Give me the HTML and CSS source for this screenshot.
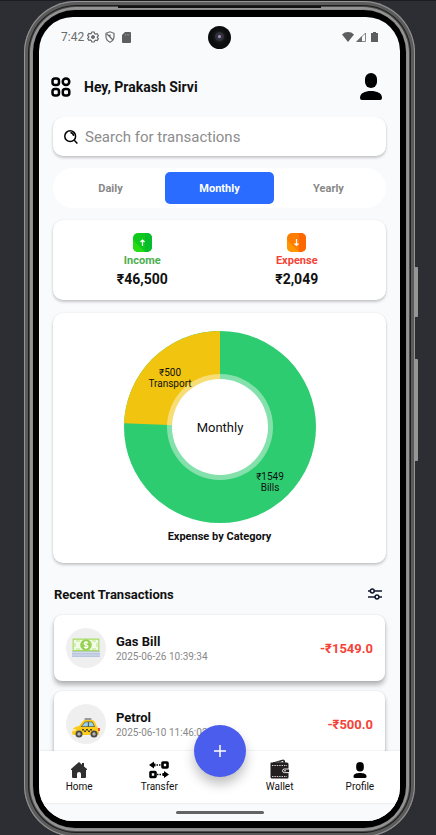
FILE: index.html
```html
<!DOCTYPE html>
<html lang="en">
<head>
<meta charset="utf-8">
<meta name="viewport" content="width=device-width, initial-scale=1">
<title>Expense tracker</title>
<link rel="stylesheet" href="styles.css">
</head>
<body>
<div class="phone">
  <span class="side-key side-key-power"></span>
  <span class="side-key side-key-volume"></span>
  <span class="speaker"></span>
  <div class="bezel">
  <div class="screen">
    <div class="status">
      <div class="status-left">
        <span>7:42</span>
        <svg width="12" height="12" viewBox="0 0 12 12" fill="none" stroke="#6b6c6e"><path stroke-width="1.2" d="M4.8 1h2.4l.4 1.5 1.1.6 1.5-.4 1.2 2-1.1 1v.9l1.1 1-1.2 2-1.5-.4-1.1.6L7.200 11H4.800l-.4-1.400-1.100-.6-1.500.4-1.200-2 1.100-1v-.9l-1.100-1 1.200-2 1.500.4 1.100-.6z"/><circle cx="6" cy="6" r="1.500" fill="#6b6c6e"/></svg>
        <svg class="shield" width="12" height="12" viewBox="0 0 12 12" fill="none" stroke="#6b6c6e" stroke-width="1.200"><path d="M2 2.300 6 .8l4 1.500v3.200c0 2.600-1.600 4.600-4 5.700-2.400-1.100-4-3.100-4-5.700zM3 3l5.500 5.500M6 6V3.500"/></svg>
        <svg class="sd" width="9" height="11" viewBox="0 0 9 11"><path fill="#5d5e60" d="M3 0h5q1 0 1 1v9q0 1-1 1H1q-1 0-1-1V3z"/><path stroke="#a8a9ab" stroke-width=".6" d="M3.500 2v1.500M5.200 2v1.500M6.900 2v1.500"/></svg>
      </div>
      <span class="camera"></span>
      <div class="status-right">
        <svg width="12" height="10" viewBox="0 0 12 10"><path fill="#5d5e60" d="M6 10 0 2.400Q2.500 0 6 0t6 2.400z"/></svg>
        <svg width="10" height="10" viewBox="0 0 10 10"><path fill="none" stroke="#6b6c6e" stroke-width=".8" d="M9.500 1v8.500H1z"/><path fill="#6b6c6e" d="M0 10 6 4v6z"/></svg>
        <svg class="battery" width="7" height="10" viewBox="0 0 7 10"><path fill="#5d5e60" d="M2 0h3v1h2v9H0V1h2z"/></svg>
      </div>
    </div>

    <header class="top">
      <button class="plain" aria-label="Menu"><svg width="20" height="20" viewBox="0 0 20 20" fill="none" stroke="#000" stroke-width="2.500"><rect x="1.500" y="1.500" width="6.500" height="6.500" rx="2.500"/><circle cx="15" cy="4.800" r="3.300"/><rect x="1.500" y="12" width="6.500" height="6.500" rx="2.500"/><rect x="11.800" y="12" width="6.500" height="6.500" rx="2.500"/></svg></button>
      <h1>Hey, Prakash Sirvi</h1>
      <button class="plain" aria-label="Account"><svg width="22" height="28" viewBox="0 0 22 28"><rect x="5" y="0" width="12" height="15" rx="6"/><path d="M0 25c0-5 5-7 11-7s11 2 11 7q0 2-2 2H2q-2 0-2-2z"/></svg></button>
    </header>

    <main>
      <label class="card search">
        <svg width="14" height="14" viewBox="0 0 14 14" fill="none" stroke="#000" stroke-width="1.500"><circle cx="6.200" cy="6.200" r="5.400"/><path d="m10.200 10.200 3.200 3.300M6.500 2.500q2.800.6 3.200 3.400"/></svg>
        <input type="text" placeholder="Search for transactions" aria-label="Search for transactions">
      </label>

      <div class="tabs">
        <button>Daily</button>
        <button class="active">Monthly</button>
        <button>Yearly</button>
      </div>

      <section class="card summary">
        <div>
          <svg width="19" height="19" viewBox="0 0 19 19"><defs><clipPath id="tile"><rect width="19" height="19" rx="5"/></clipPath></defs><g clip-path="url(#tile)"><path fill="#0fca1c" d="M0 0h19v19H0z"/><path fill="#27dc12" d="m0 7 12 12H0z"/><path fill="#07bd2c" d="M12 0h7v19h-7z"/></g><path fill="none" stroke="#fff" stroke-width="1.200" d="M9.500 13V7M7.500 9l2-2 2 2"/></svg>
          <span class="income">Income</span>
          <strong>₹46,500</strong>
        </div>
        <div>
          <svg width="19" height="19" viewBox="0 0 19 19"><g clip-path="url(#tile)"><path fill="#ff7d00" d="M0 0h19v19H0z"/><path fill="#ff9800" d="m0 7 12 12H0z"/><path fill="#ff6800" d="M12 0h7v19h-7z"/></g><path fill="none" stroke="#fff" stroke-width="1.200" d="M9.500 6v6.500M7.500 10.500l2 2 2-2"/></svg>
          <span class="expense">Expense</span>
          <strong>₹2,049</strong>
        </div>
      </section>

      <section class="card chart">
        <svg width="192" height="192" viewBox="0 0 192 192" role="img" aria-label="Expense by Category">
          <circle cx="96" cy="96" r="96" fill="#2ecc71"/>
          <path fill="#f1c40f" d="M96 96V0A96 96 0 0 0 .07 92.300z"/>
          <circle cx="96" cy="96" r="53" fill="#fff" fill-opacity=".42"/>
          <circle cx="96" cy="96" r="48" fill="#fff"/>
          <g class="slice-label"><text x="46" y="45">₹500</text><text x="46" y="56">Transport</text><text x="146" y="149">₹1549</text><text x="146" y="160">Bills</text></g>
          <text class="period" x="96" y="101">Monthly</text>
        </svg>
        <h2>Expense by Category</h2>
      </section>

      <div class="recent">
        <h2>Recent Transactions</h2>
        <button class="plain" aria-label="Filter"><svg width="14" height="12" viewBox="0 0 14 12" fill="none" stroke="#10182e" stroke-width="1.500"><path d="M0 3h2.500M6 3h8M0 9h7M11 9h3"/><circle cx="4.300" cy="3" r="1.900"/><circle cx="9" cy="9" r="1.900"/></svg></button>
      </div>

      <ul class="list">
        <li>
          <span class="avatar"><svg width="28" height="20" viewBox="0 0 28 20"><path fill="#b9c5df" d="M0 13h28v6H0z"/><path stroke="#d5ddec" d="M0 14.500h28M0 17h28"/><path fill="#f2fbe9" stroke="#a6dc62" stroke-width="1.200" d="M1.200 1.200h25.600v11.500H1.200z"/><path fill="none" stroke="#b9e580" d="M4 3h4M20 3h4M4 11h4M20 11h4M3 5v4M25 5v4"/><circle cx="14" cy="7" r="5.800" fill="#97d350"/><path fill="none" stroke="#fff" stroke-width="1.200" d="M16 5.200q-.5-1-2-1-1.800 0-1.800 1.400T14 7t1.900 1.400-1.900 1.400q-1.500 0-2-1M14 3v8"/></svg></span>
          <div class="info"><b>Gas Bill</b><time>2025-06-26 10:39:34</time></div>
          <span class="amount">-₹1549.0</span>
        </li>
        <li>
          <span class="avatar"><svg class="taxi" width="28" height="20" viewBox="0 0 28 20"><rect x="12.500" y="0" width="7" height="3.500" rx="1" fill="#999"/><path fill="#fccb1b" d="M1 11q1-2 6-3l4-5q1-1 3-1h6q2 0 3 2l2 5q2 1 2 3v4q0 1-2 1H2q-2 0-2-2l.5-2z"/><path fill="#6b5e36" d="m8.500 9 3.800-4.600q.7-.9 2-.9h5q1.200 0 1.800 1.200L23 9z"/><path fill="#91d5f5" d="m10 8.300 3-3.600q.5-.5 1.300-.5h1.500v4.100zM17 4.200h2.300q.8 0 1.200.8l1.400 3.300H17z"/><path fill="#4b422c" d="M10 11h2v1.500h2V11h2v1.500h2V11h2v1.500h-2V14h-2v-1.500h-2V14h-2v-1.500h-2z"/><path fill="#e64a3c" d="M26 10h2v3h-2z"/><path fill="#fff1a0" d="M1 11h3l-1 2H.5z"/><circle cx="7" cy="16" r="3.500" fill="#4a4a4c"/><circle cx="22" cy="16" r="3.500" fill="#4a4a4c"/><circle cx="7" cy="16" r="1.700" fill="#b5b5b7"/><circle cx="22" cy="16" r="1.700" fill="#b5b5b7"/></svg></span>
          <div class="info"><b>Petrol</b><time>2025-06-10 11:46:02</time></div>
          <span class="amount">-₹500.0</span>
        </li>
      </ul>
    </main>

    <nav class="tabbar">
      <a href="#"><svg width="18" height="18" viewBox="0 0 18 18"><path fill="#303030" d="M9 1 1 8v1h1v7q0 1 1 1h4v-4q0-2 2-2t2 2v4h4q1 0 1-1V9h1V8l-3-2.600V2h-2v1.700z"/></svg>Home</a>
      <a href="#"><svg width="20" height="18" viewBox="0 0 20 18"><path d="M5 .5v2h1.500v3H5v2L0 4zM15 10v2h-1.500v3H15v2l5-3.500z"/><path fill="none" stroke="#000" stroke-width="1.600" stroke-dasharray="1.500 1" d="M7.500 4H12M8 13.500h5.500"/><rect x="13.500" y="1.500" width="5" height="5" rx=".5" fill="none" stroke="#000" stroke-width="2.600"/><rect x="1.500" y="11" width="5" height="5" rx=".5" fill="none" stroke="#000" stroke-width="2.600"/></svg>Transfer</a>
      <button class="fab" aria-label="Add transaction"><svg width="12" height="12" viewBox="0 0 12 12"><path stroke="#fff" stroke-width="1.500" d="M6 0v12M0 6h12"/></svg></button>
      <a href="#"><svg width="20" height="20" viewBox="0 0 20 20"><path fill="#fff" stroke="#231f20" d="m3 4 10-3 1.500 3zM9 3l5-2 1 3"/><path fill="#231f20" d="M1 3.500h16q1.500 0 1.500 1.500v13.500q0 1-1 1H2q-1.500 0-1.500-1.500V4z"/><path stroke="#fff" stroke-width=".8" stroke-dasharray="1.400 1" d="M2 6.500h15M2 17.500h15"/><path fill="#231f20" stroke="#fff" stroke-width=".9" d="M19.500 10h-5q-2 0-2 1.800t2 1.800h5z"/><circle cx="15" cy="11.800" r=".8" fill="#fff"/></svg>Wallet</a>
      <a href="#"><svg width="14" height="18" viewBox="0 0 14 18"><rect x="3.200" y="1" width="7.600" height="9.500" rx="3.800"/><path d="M.5 15.500C.5 12.500 4 12 7 12s6.500.5 6.500 3.500q0 1.500-1.500 1.500H2Q.5 17 .5 15.500z"/></svg>Profile</a>
    </nav>
    <div class="gesture"><span></span></div>
  </div>
  </div>
</div>
</body>
</html>
```
FILE: styles.css
```css
* { box-sizing: border-box; }

body {
  margin: 0;
  height: 100vh;
  overflow: hidden;
  display: flex;
  flex-direction: column;
  background: #2d2e33;
  border-top: 1px solid #1c1c20;
  font-family: Roboto, "Liberation Sans", sans-serif;
  color: #111;
}

h1, h2, ul { margin: 0; padding: 0; }
button { font: inherit; border: 0; cursor: pointer; }
svg { display: block; flex: none; }

.phone {
  position: relative;
  flex: 1;
  min-height: 0;
  margin: 0 21px -2px 24px;
  padding: 9px;
  border-radius: 52px;
  display: flex;
  background: #8a8a8a;
  box-shadow:
    inset 0 0 0 1px #959595,
    inset 0 0 0 4px #5b5b5b,
    inset 0 0 0 5px #1d1d1d,
    inset 0 0 0 6px #4a4a4a,
    inset 0 0 0 8px #939393;
}

.side-key {
  position: absolute;
  left: 100%;
  width: 3px;
  border-radius: 0 1px 1px 0;
  background: #969696;
}
.side-key-power { top: 266px; height: 50px; }
.side-key-volume { top: 358px; height: 102px; }

.speaker {
  position: absolute;
  top: 5px;
  left: 24%;
  right: 24%;
  height: 2px;
  background: #111;
}

.bezel {
  flex: 1;
  min-width: 0;
  padding: 7px 6px;
  display: flex;
  border-radius: 42px;
  background: #000;
}

.screen {
  flex: 1;
  min-width: 0;
  display: flex;
  flex-direction: column;
  overflow: hidden;
  border-radius: 34px;
  background: #f9fafc;
}

.status {
  flex: none;
  display: grid;
  grid-template-columns: 1fr auto 1fr;
  align-items: center;
  height: 40px;
  padding: 0 22px;
  font-size: 12px;
  color: #6b6c6e;
}
.status-left, .status-right { display: flex; align-items: center; }
.status-left { gap: 3px; }
.shield { margin-left: 2px; }
.sd { margin-left: 3px; }
.status-right { justify-content: flex-end; gap: 2px; }
.battery { margin-left: 3px; }
.camera {
  width: 23px;
  height: 23px;
  border-radius: 50%;
  background: radial-gradient(circle at 50% 46%, #a58bc0 0 1px, #36303f 2px, #2c333a 4px, #17181a 5px, #0c0d0e 8px);
}

.top {
  flex: none;
  display: flex;
  align-items: center;
  gap: 13px;
  height: 60px;
  padding: 0 18px 0 12px;
}
.top h1 { flex: 1; font-size: 14px; font-weight: 700; }
.plain { padding: 0; background: none; }

main {
  flex: 1;
  min-height: 0;
  overflow: hidden;
  padding: 0 14px;
  display: flex;
  flex-direction: column;
}
main > * { flex: none; }

.card {
  background: #fff;
  border-radius: 10px;
  box-shadow: 0 2px 3px rgba(0, 0, 0, .2), 0 0 2px rgba(0, 0, 0, .08);
}

.search {
  display: flex;
  align-items: center;
  gap: 7px;
  height: 39px;
  padding: 0 11px;
}
.search input {
  flex: 1;
  min-width: 0;
  padding: 0;
  border: 0;
  outline: 0;
  background: none;
  font: 15px Roboto, "Liberation Sans", sans-serif;
}
.search input::placeholder { color: #8c8c8c; opacity: 1; }

.tabs {
  display: grid;
  grid-template-columns: repeat(3, 1fr);
  margin-top: 12px;
  padding: 4px 3px;
  border-radius: 20px;
  background: #fff;
}
.tabs button {
  height: 32px;
  padding: 0;
  border-radius: 5px;
  background: none;
  font-size: 11px;
  font-weight: 700;
  color: #888;
}
.tabs .active { background: #2a6cff; color: #fff; }

.summary {
  display: grid;
  grid-template-columns: 1fr 1fr;
  margin-top: 12px;
  padding: 13px 12px 12px;
}
.summary div { display: flex; flex-direction: column; align-items: center; }
.summary span { margin-top: 2px; font-size: 11px; line-height: 14px; font-weight: 700; }
.summary strong { margin-top: 2px; font-size: 14px; line-height: 18px; font-weight: 700; }
.income { color: #4caf50; }
.expense { color: #f44336; }

.chart {
  display: flex;
  flex-direction: column;
  align-items: center;
  margin-top: 13px;
  padding: 18px 0;
}
.chart text { text-anchor: middle; fill: #111; }
.slice-label { font-size: 10px; }
.period { font-size: 13px; }
.chart h2 { margin-top: 6px; font-size: 11px; line-height: 16px; }

.recent {
  display: flex;
  align-items: center;
  justify-content: space-between;
  height: 52px;
  padding: 10px 4px 0 1px;
}
.recent h2 { font-size: 13px; }

.list { list-style: none; padding: 0 1px; }
.list li {
  display: flex;
  align-items: center;
  height: 66px;
  margin-bottom: 10px;
  padding: 0 12px;
  border-radius: 8px;
  background: #fff;
  box-shadow: 0 4px 5px rgba(0, 0, 0, .28), 0 0 2px rgba(0, 0, 0, .12);
}
.avatar {
  display: grid;
  place-items: center;
  width: 40px;
  height: 40px;
  border-radius: 50%;
  background: #efefef;
}
.taxi { margin-top: 8px; }
.info { flex: 1; display: flex; flex-direction: column; margin-left: 10px; }
.info b { font-size: 13px; line-height: 17px; }
.info time { font-size: 10px; line-height: 14px; color: #888; }
.amount { font-size: 13px; font-weight: 700; color: #f44336; }

.tabbar {
  position: relative;
  flex: none;
  display: grid;
  grid-template-columns: repeat(2, 2fr) minmax(0, 1fr) repeat(2, 2fr);
  height: 52px;
  background: #fff;
  box-shadow: 0 0 2px rgba(0, 0, 0, .12);
}
.tabbar a {
  display: flex;
  flex-direction: column;
  align-items: center;
  justify-content: flex-end;
  height: 42px;
  gap: 2px;
  font-size: 10px;
  line-height: 12px;
  color: #111;
  text-decoration: none;
}
.fab {
  justify-self: center;
  display: grid;
  place-items: center;
  width: 52px;
  height: 52px;
  margin-top: -26px;
  padding: 0;
  border-radius: 50%;
  background: #4a5dec;
  box-shadow: 0 7px 12px rgba(0, 0, 0, .25);
}

.gesture {
  flex: none;
  display: grid;
  place-items: center;
  height: 18px;
  background: #f9fafc;
}
.gesture span { width: 88px; height: 3px; border-radius: 2px; background: #626365; }
```
